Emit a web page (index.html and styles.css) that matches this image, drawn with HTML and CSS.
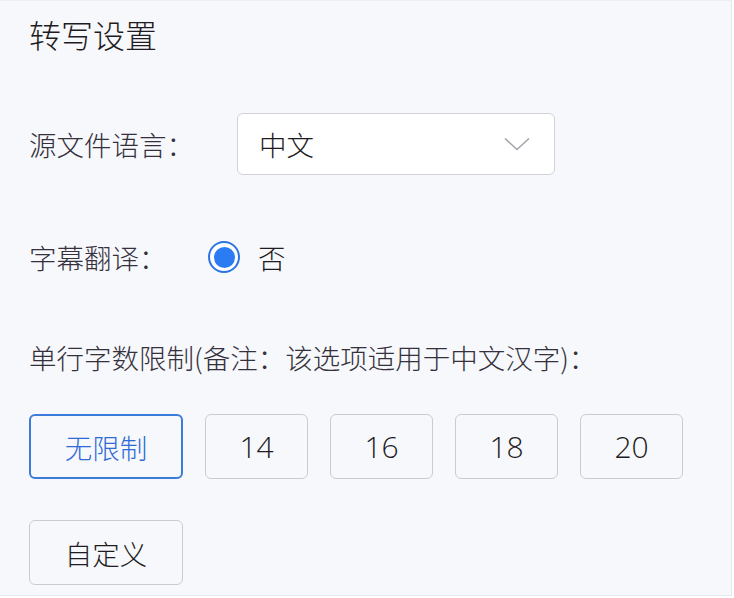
FILE: index.html
```html
<!DOCTYPE html>
<html lang="zh-CN">
<head>
    <meta charset="UTF-8">
    <meta name="viewport" content="width=device-width, initial-scale=1.0">
    <title>转写设置</title>
    <link rel="stylesheet" href="styles.css">
</head>
<body>
    <div class="panel">
        <h1 class="title">转写设置</h1>

        <div class="form-row row-lang">
            <span class="label">源文件语言：</span>
            <div class="select">
                <span class="select-value">中文</span>
                <svg class="chevron" width="26" height="14" viewBox="0 0 26 14">
                    <path d="M1 1.5 L13 12.5 L25 1.5" fill="none" stroke="#a3a6ad" stroke-width="1.6"/>
                </svg>
            </div>
        </div>

        <div class="form-row row-translate">
            <span class="label">字幕翻译：</span>
            <label class="radio-option">
                <span class="radio checked"></span>
                <span class="radio-text">否</span>
            </label>
        </div>

        <div class="form-row row-limit">
            <span class="label">单行字数限制(备注：该选项适用于中文汉字)：</span>
        </div>

        <div class="options">
            <button class="opt wide active">无限制</button>
            <button class="opt num">14</button>
            <button class="opt num">16</button>
            <button class="opt num">18</button>
            <button class="opt num">20</button>
            <button class="opt wide">自定义</button>
        </div>
    </div>
</body>
</html>
```

FILE: styles.css
```css
body {
    margin: 0;
    padding: 0;
    background: #ffffff;
    font-family: "Noto Sans CJK SC", "Noto Sans", sans-serif;
    font-weight: 300;
    color: #2a2630;
}
.panel {
    width: 732px;
    height: 596px;
    box-sizing: border-box;
    padding: 13px 0 0 29px;
    background: #f6f8fb;
    border-top: 1px solid #eceef2;
    border-right: 1px solid #e6e8ec;
    border-bottom: 1px solid #e6e8ec;
}
.title {
    margin: 0;
    font-size: 32px;
    font-weight: 300;
    line-height: 40px;
    color: #1e1b22;
}
.form-row {
    display: flex;
    align-items: center;
}
.label {
    font-size: 27.5px;
    line-height: 40px;
    color: #35303b;
}
.row-lang {
    margin-top: 59px;
    height: 62px;
}
.row-lang .label {
    width: 208px;
}
.select {
    width: 318px;
    height: 62px;
    box-sizing: border-box;
    display: flex;
    align-items: center;
    justify-content: space-between;
    padding: 0 24px 0 21px;
    background: #fff;
    border: 1px solid #cfd2d8;
    border-radius: 6px;
}
.select-value {
    font-size: 27.5px;
    color: #1e1b22;
}
.chevron {
    display: block;
}
.row-translate {
    margin-top: 62px;
    height: 40px;
}
.row-translate .label {
    width: 179px;
}
.radio-option {
    display: flex;
    align-items: center;
    gap: 18px;
}
.radio {
    width: 32px;
    height: 32px;
    box-sizing: border-box;
    border: 2px solid #2c74e6;
    border-radius: 50%;
    background: #fff;
    display: flex;
    align-items: center;
    justify-content: center;
}
.radio.checked::after {
    content: "";
    width: 21px;
    height: 21px;
    border-radius: 50%;
    background: #2b7bf3;
}
.radio-text {
    font-size: 27.5px;
    color: #1e1b22;
}
.row-limit {
    margin-top: 60px;
    height: 40px;
}
.options {
    display: flex;
    flex-wrap: wrap;
    gap: 41px 22px;
    margin-top: 37px;
    width: 690px;
}
.opt {
    width: 103px;
    height: 65px;
    box-sizing: border-box;
    background: transparent;
    border: 1px solid #c9ccd2;
    border-radius: 6px;
    font-family: "Noto Sans CJK SC", sans-serif;
    font-weight: 300;
    font-size: 27.5px;
    color: #1e1b22;
    padding: 0;
    cursor: pointer;
}
.opt.num {
    font-family: "Open Sans", "Noto Sans", sans-serif;
    font-size: 30px;
}
.opt.wide {
    width: 154px;
}
.opt.active {
    border: 2px solid #3a7bdc;
    color: #2f6ad6;
}
```
